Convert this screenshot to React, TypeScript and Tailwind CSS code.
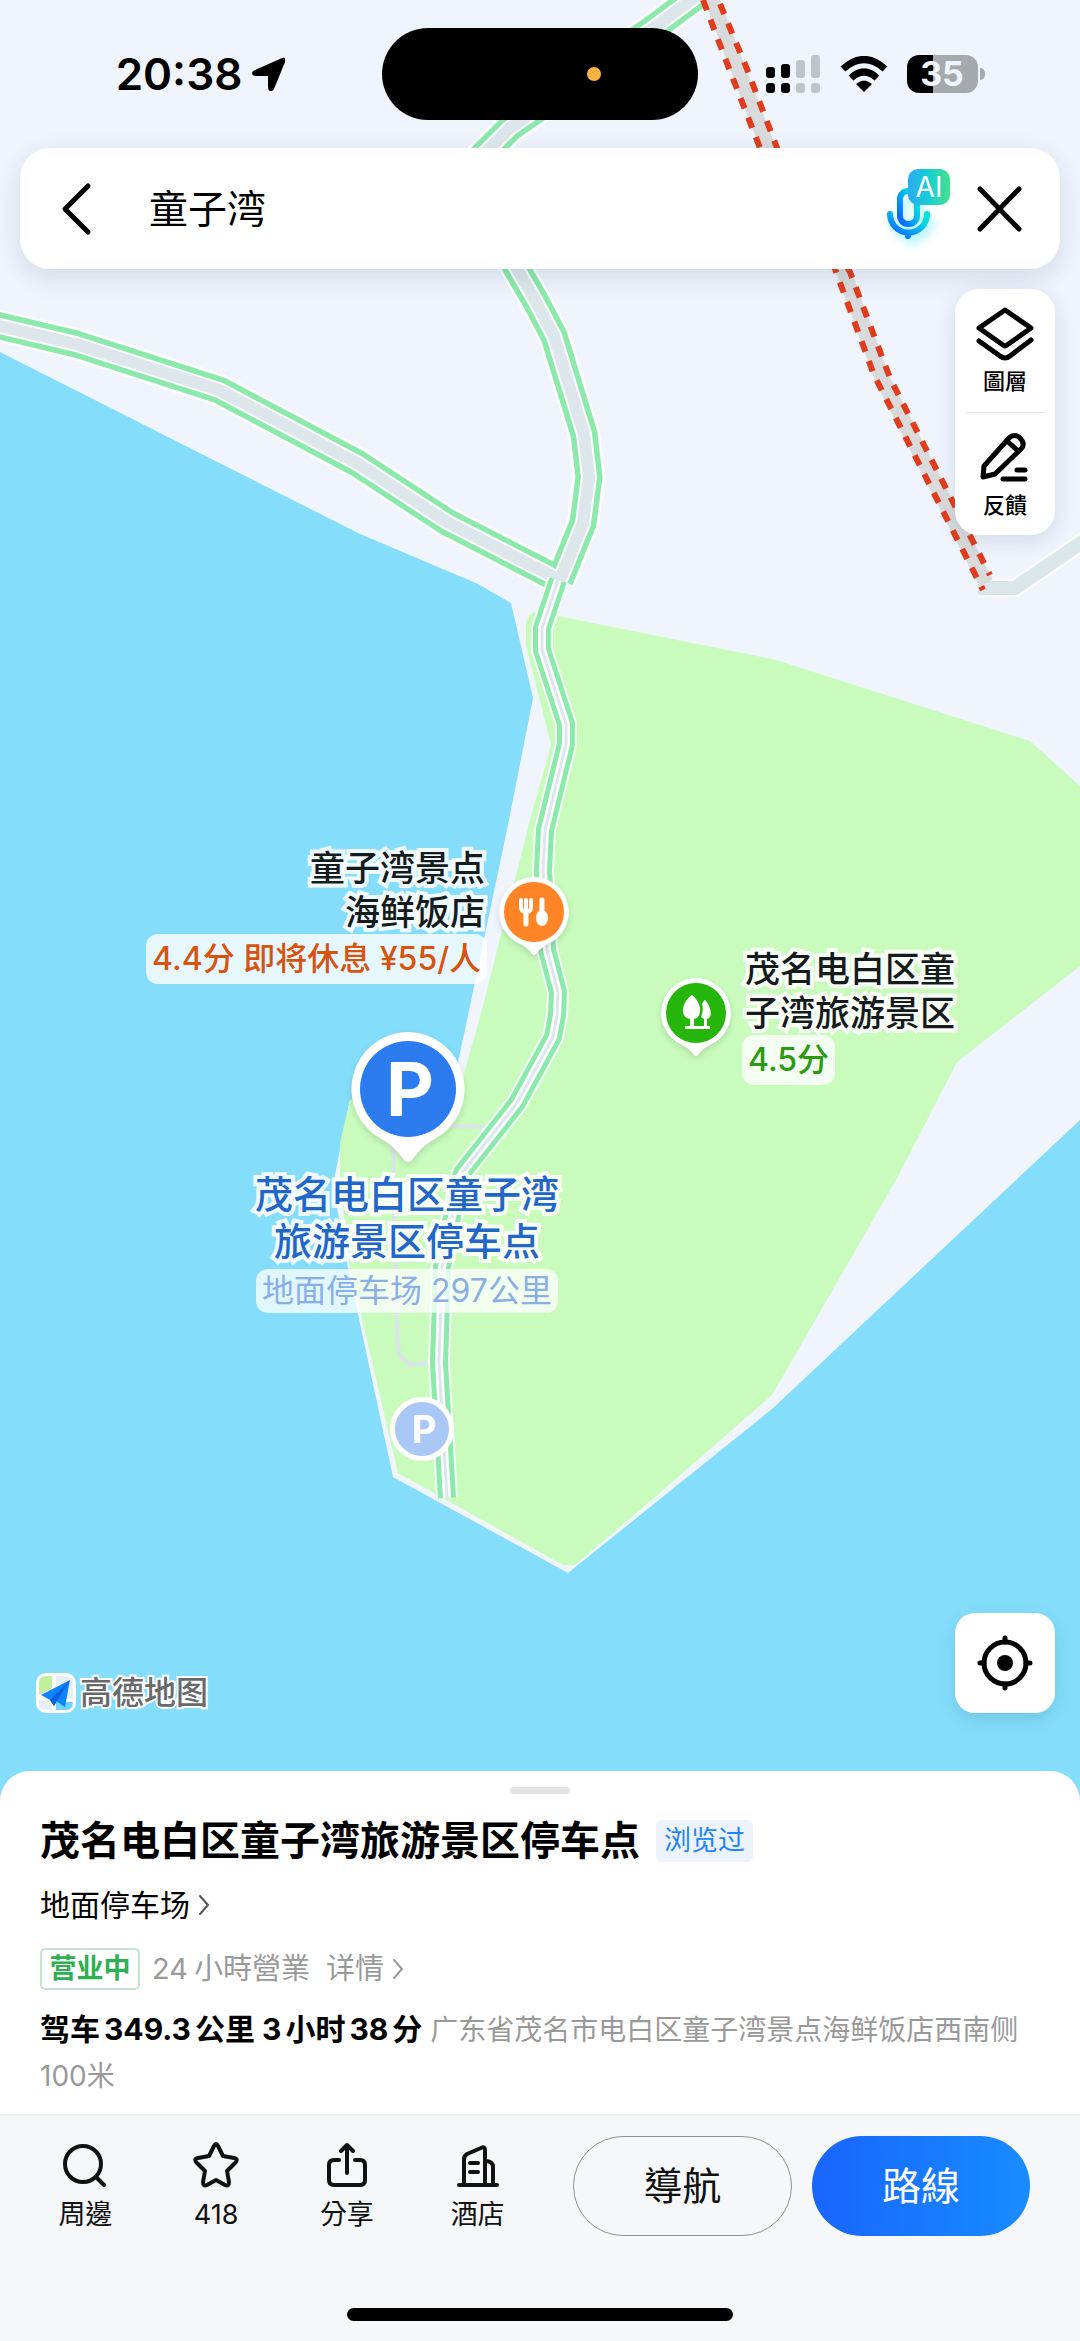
import { useState } from "react";
import type { ReactNode } from "react";

const LEFT_ROAD = "M-10 323 L0 326 L76 344 L219 390 L357 463 L447 522 L560 580";
const MAIN_ROAD = "M720 -22 L694 -2 L652 29 L510 128 L468 170 L480 200 L517 269 L535 300 L554 336 L584 434 L589 477 L583 523 L560 580";
const ISLAND_ROAD =
  "M558 580 L542 628 L542 650 L566 724 L566 744 L545 830 L543 870 L547 950 L558 992 L557 1015 L553 1037 L517 1103 L462 1173 L452 1217 L442 1267 L439 1363 L444 1447 L447 1498";

function MapCanvas() {
  return (
    <svg className="absolute inset-0 h-full w-full" aria-hidden="true">
      <path
        fill="#84defb"
        d="M0 352 L358 533 L478 584 L511 603 L533 698 L509 820 L467 1020 L452 1090 L350 1100 L333 1185 L347 1263 L393 1477 L568 1573 L772 1409 L1080 1120 L3000 -700 V3000 H0 Z"
      />
      <path
        fill="#c8fbbc"
        d="M536 612 L558 616 L776 660 L1030 741 L1080 786 V966 L957 1062 L896 1180 L772 1395 L640 1510 L575 1565 L563 1565 L398 1473 L349 1263 L340 1177 L340 1143 L350 1100 L460 1092 L465 1070 L482 1010 L530 820 L551 745 L526 645 L526 622 Q529 613 536 612 Z"
      />
      <g fill="none" strokeLinejoin="round">
        <path stroke="#dbe4ea" strokeWidth="4" d="M393 1140 L397 1330 L399 1355 L410 1365 L432 1362 M440 1126 L488 1127" />

        <path stroke="#fbfdfe" strokeWidth="19" d="M978 588 L1015 588 L1100 530" />
        <path stroke="#dbe6ea" strokeWidth="14" d="M978 588 L1015 588 L1100 530" />

        <path stroke="#fff" strokeWidth="32" d={LEFT_ROAD} />
        <path stroke="#fff" strokeWidth="32" d={MAIN_ROAD} />
        <path stroke="#8be9ab" strokeWidth="27" d={LEFT_ROAD} />
        <path stroke="#8be9ab" strokeWidth="27" d={MAIN_ROAD} />
        <path stroke="#fff" strokeWidth="16" d={LEFT_ROAD} />
        <path stroke="#fff" strokeWidth="16" d={MAIN_ROAD} />
        <path stroke="#dde7eb" strokeWidth="12" strokeLinecap="round" d={LEFT_ROAD} />
        <path stroke="#dde7eb" strokeWidth="12" strokeLinecap="round" d={MAIN_ROAD} />

        <path stroke="#f4fdf6" strokeWidth="22" d={ISLAND_ROAD} />
        <path stroke="#8be9ab" strokeWidth="18" d={ISLAND_ROAD} />
        <path stroke="#fff" strokeWidth="8" d={ISLAND_ROAD} />
        <path stroke="#dde7eb" strokeWidth="3" d={ISLAND_ROAD} />

        {/* closed road: grey bed with a dashed kerb on both sides */}
        <path stroke="#d9dadb" strokeWidth="15" d="M706 -16 L712 0 L768 148 L843 270 L882 378 L986 583" />
        <path stroke="#e03c1c" strokeWidth="6" strokeDasharray="11 10" d="M703 0 L730 71 L760 148 L835 269 L874 375 L983 590" />
        <path stroke="#e03c1c" strokeWidth="6" strokeDasharray="11 10" d="M720 4 L747 69 L777 148 L850 272 L890 378 L990 575" />
      </g>
    </svg>
  );
}

type PinProps = { color: string; children: ReactNode; className: string };

function Pin({ color, children, className }: PinProps) {
  return (
    <svg viewBox="0 0 72 82" className={`absolute h-[82px] w-[72px] overflow-visible drop-shadow-md ${className}`} aria-hidden="true">
      <path fill="#fff" d="M36 1 A35 35 0 0 1 50 68 Q43 71 38 78 Q36 80 34 78 Q29 71 22 68 A35 35 0 0 1 36 1 Z" />
      <circle cx="36" cy="36" r="30" fill={color} />
      {children}
    </svg>
  );
}

const OUTLINE = "[-webkit-text-stroke:8px_#ffffffe6] [paint-order:stroke_fill]";

function MapPins() {
  return (
    <>
      <Pin color="#ff8426" className="left-[498px] top-[876px]">
        <g fill="none" stroke="#fff" strokeLinecap="round">
          <path strokeWidth="4" d="M23 24 V31 Q23 36 28 36 Q33 36 33 31 V24 M28 24 V36" />
          <path strokeWidth="5" d="M28 36 V48 M44 24 V40" />
        </g>
        <ellipse cx="44" cy="42" rx="6" ry="8" fill="#fff" />
      </Pin>
      <div className="absolute right-[calc(100%-487px)] top-[846px] flex flex-col items-end whitespace-nowrap">
        <p className={`pr-[2px] text-right text-[35px] font-medium leading-[44px] text-[#151a1c] ${OUTLINE}`}>
          童子湾景点
          <br />
          海鲜饭店
        </p>
        <p className="rounded-xl bg-white/80 px-[6px] text-[32px] font-medium leading-[50px] text-[#d8530f]">4.4分 即将休息 ¥55/人</p>
      </div>

      <Pin color="#25b50b" className="left-[660px] top-[977px]">
        <path fill="#fff" d="M32 18 C37 22 41 29 40 35 Q39 41 34 42 V49 H44 V42 Q42 41 41 40 Q44 34 42 27 Q44 23 45 23 C50 28 54 40 47 42 V49 H50 V52 H25 V49 H30 V42 Q24 41 23 35 C22 29 27 21 32 18 Z" />
      </Pin>
      <div className="absolute left-[742px] top-[947px] flex flex-col items-start whitespace-nowrap">
        <p className={`pl-[3px] text-[35px] font-medium leading-[44px] text-[#151a1c] ${OUTLINE}`}>
          茂名电白区童
          <br />
          子湾旅游景区
        </p>
        <p className="rounded-xl bg-white/80 px-[6px] text-[32px] font-medium leading-[50px] text-[#2a9a10]">4.5分</p>
      </div>

      <div className="absolute left-[351px] top-[1032px] h-[131px] w-[114px] drop-shadow-md">
        <svg viewBox="0 0 114 131" className="absolute inset-0 overflow-visible" aria-hidden="true">
          <path fill="#fff" d="M57 0 A57 57 0 0 1 82 108 Q72 113 61 128 Q57 132 53 128 Q42 113 32 108 A57 57 0 0 1 57 0 Z" />
          <circle cx="57" cy="57" r="48" fill="#2c7cf0" />
        </svg>
        <span className="absolute inset-x-0 top-0 pl-1 text-center text-[74px] font-bold leading-[115px] text-white">P</span>
      </div>
      <div className="absolute left-[255px] top-[1171px] flex w-[304px] flex-col items-center whitespace-nowrap">
        <p className={`text-center text-[38px] font-medium leading-[47px] text-[#2166c8] ${OUTLINE}`}>
          茂名电白区童子湾
          <br />
          旅游景区停车点
        </p>
        <p className="mt-1 rounded-xl bg-white/75 px-[6px] text-[32px] leading-[44px] text-[#8aaee6]">地面停车场 297公里</p>
      </div>

      <div className="absolute left-[390px] top-[1397px] size-16 rounded-full border-5 border-white bg-[#a9c8f6] pl-1 text-center text-[38px] font-bold leading-[54px] text-white">
        P
      </div>
    </>
  );
}

function StatusBar() {
  return (
    <div className="grid h-[92px] grid-cols-[1fr_auto_1fr] items-center">
      <div className="flex items-center justify-center gap-[10px] pl-5">
        <span className="text-[44px] font-semibold leading-[48px]">20:38</span>
        <svg viewBox="0 0 34 34" className="size-[34px]" aria-hidden="true">
          <path d="M30 1 Q34 -1 33 5 L22 32 Q20 35 18 34 Q16 33 16 30 V19 H4 Q0 19 0 16 Q0 14 3 13 Z" />
        </svg>
      </div>
      <div className="flex h-full w-[316px] items-center rounded-full bg-black">
        <span className="ml-[205px] size-[14px] rounded-full bg-[#ffb340]" />
      </div>
      <div className="flex items-center justify-center gap-[19px] pr-7">
        <svg viewBox="0 0 55 38" className="h-[38px] w-[55px]" aria-hidden="true">
          <g>
            <rect x="0" y="12" width="9" height="11" rx="3" />
            <rect x="15" y="9" width="9" height="14" rx="3" />
            <rect x="0" y="28" width="9" height="10" rx="3" />
            <rect x="15" y="28" width="9" height="10" rx="3" />
          </g>
          <g fill="#bfc3ca">
            <rect x="30" y="5" width="9" height="18" rx="3" />
            <rect x="45" y="0" width="9" height="23" rx="3" />
            <rect x="30" y="28" width="9" height="10" rx="3" />
            <rect x="45" y="28" width="9" height="10" rx="3" />
          </g>
        </svg>
        <svg viewBox="0 0 48 36" className="h-9 w-12" aria-hidden="true">
          <path d="M24 36 L16 28 Q24 21 32 28 Z" />
          <path fill="none" stroke="#000" strokeWidth="7" d="M3 13 Q24 -6 45 13 M11 22 Q24 10 37 22" />
        </svg>
        <div className="flex items-center gap-[2px]">
          <div className="h-[38px] w-[71px] rounded-[12px] bg-[linear-gradient(90deg,#000_36%,#a6a9ae_36%)] text-center text-[34px] font-bold leading-[38px] text-[#eff4fd]">
            35
          </div>
          <span className="h-3 w-[5px] rounded-r-full bg-[#a6a9ae]" />
        </div>
      </div>
    </div>
  );
}

function SearchCard() {
  const [keyword, setKeyword] = useState("童子湾");

  return (
    <form className="mx-5 mt-7 flex h-[121px] items-center rounded-[30px] bg-white pl-9 pr-[34px] shadow-[0_8px_24px_rgba(60,90,110,0.16)]">
      <button type="button" aria-label="返回">
        <svg viewBox="0 0 42 54" className="h-[54px] w-[42px]" fill="none" stroke="#000" strokeWidth="5" strokeLinecap="round" strokeLinejoin="round">
          <path d="M32 4 L9 27 L32 50" />
        </svg>
      </button>
      <input
        aria-label="搜索"
        value={keyword}
        onChange={(e) => setKeyword(e.target.value)}
        className="ml-[51px] min-w-0 flex-1 bg-transparent text-[39px] leading-[56px] outline-none"
      />
      <button type="button" aria-label="AI 语音搜索" className="relative mb-2 mr-[22px] h-[76px] w-[68px]">
        <svg viewBox="0 0 68 76" className="h-full w-full drop-shadow-[4px_6px_5px_rgba(0,220,230,0.35)]" fill="none" strokeLinecap="round">
          <defs>
            <linearGradient id="mic" x1="0" y1="1" x2="1" y2="0">
              <stop offset="0.1" stopColor="#0a6cff" />
              <stop offset="0.8" stopColor="#00dfe2" />
            </linearGradient>
          </defs>
          <rect x="18" y="24" width="17" height="33" rx="8" stroke="url(#mic)" strokeWidth="6" />
          <path d="M8 47 A18 18 0 0 0 45 47 M26 66 V69" stroke="url(#mic)" strokeWidth="6" />
        </svg>
        <span className="absolute left-[26px] top-[2px] h-9 w-[42px] rounded-[10px] bg-linear-to-r from-[#2fa8f5] via-[#12cfd0] to-[#43e08a] text-[28px] leading-9 text-white">
          AI
        </span>
      </button>
      <button type="button" aria-label="清除">
        <svg viewBox="0 0 54 54" className="size-[54px]" stroke="#000" strokeWidth="5" strokeLinecap="round">
          <path d="M8 7 L47 47 M47 7 L8 47" />
        </svg>
      </button>
    </form>
  );
}

function MapTools() {
  return (
    <div className="mr-[25px] mt-5 flex w-[100px] flex-col self-end rounded-[24px] bg-white px-[10px] font-['Inter','Noto_Sans_CJK_TC',sans-serif] text-[22px] font-medium leading-8 shadow-[0_6px_20px_rgba(60,90,110,0.16)]">
      <button type="button" className="flex h-[124px] flex-col items-center border-b border-[#e4e6e8] pt-4">
        <svg viewBox="0 0 60 56" className="h-14 w-15" fill="none" stroke="#000" strokeWidth="5" strokeLinecap="round" strokeLinejoin="round">
          <path d="M30 5 L56 23 L32 40 Q30 42 28 40 L4 23 Z" />
          <path d="M4 36 L25 51 Q30 55 35 51 L56 35" />
        </svg>
        <span className="mt-[4px]">圖層</span>
      </button>
      <button type="button" className="flex h-[122px] flex-col items-center pt-4">
        <svg viewBox="0 0 60 56" className="h-14 w-15" fill="none" stroke="#000" strokeWidth="5" strokeLinecap="round" strokeLinejoin="round">
          <path d="M8 48 L9 37 L34 9 Q39 4 45 9 Q51 15 46 20 L20 45 Z M32 12 L43 22" />
          <path d="M42 41 H50 M28 50 H50" />
        </svg>
        <span className="mt-[4px]">反饋</span>
      </button>
    </div>
  );
}

function MapFooter() {
  return (
    <div className="mt-auto flex items-end justify-between pl-9 pr-[25px]">
      <div className="flex items-center gap-1">
        <svg viewBox="0 0 40 40" className="size-10" aria-hidden="true">
          <rect width="40" height="40" rx="10" fill="#fff" />
          <path fill="#c0f09c" d="M3 10 Q3 3 10 3 H16 V15 L3 22 Z" />
          <path fill="#e9eef1" d="M20 3 H30 Q37 3 37 10 V26 H20 Z M3 27 H16 V37 H10 Q3 37 3 30 Z" />
          <path fill="#6fd2fa" d="M20 29 H37 Q37 37 30 37 H20 Z" />
          <path fill="#0a84ff" d="M34 7 L5 22 L14 27 L18 33 L20 28 L29 34 Z" />
          <path fill="#0a5fe0" d="M34 7 L14 27 L18 33 Z" />
        </svg>
        <span className="text-[32px] font-medium leading-10 text-[#67696b] [-webkit-text-stroke:4px_#ffffff] [paint-order:stroke_fill]">高德地图</span>
      </div>
      <button type="button" aria-label="定位" className="flex size-[100px] items-center justify-center rounded-[20px] bg-white shadow-[0_6px_16px_rgba(30,90,120,0.18)]">
        <svg viewBox="0 0 56 56" className="size-14" fill="none" stroke="#000" strokeWidth="5" strokeLinecap="round">
          <circle cx="28" cy="28" r="21" />
          <path d="M28 3 V7 M28 49 V53 M3 28 H7 M49 28 H53" />
          <circle cx="28" cy="28" r="8" fill="#000" stroke="none" />
        </svg>
      </button>
    </div>
  );
}

function Chevron({ color }: { color: string }) {
  return (
    <svg viewBox="0 0 12 22" className="h-[22px] w-3" fill="none" stroke={color} strokeWidth="2" strokeLinecap="round" strokeLinejoin="round" aria-hidden="true">
      <path d="M2 2 L10 11 L2 20" />
    </svg>
  );
}

function PlaceSheet() {
  return (
    <section className="relative -mt-8 rounded-t-[30px] bg-white px-10 pb-[15px] pt-4">
      <div className="mx-auto h-[7px] w-[60px] rounded-full bg-[#e3e3e3]" />
      <div className="mt-[26px] flex h-[42px] items-center gap-4">
        <h1 className="whitespace-nowrap text-[40px] font-bold leading-[42px]">茂名电白区童子湾旅游景区停车点</h1>
        <span className="whitespace-nowrap rounded-md bg-[#edf3fe] px-2 text-[27px] leading-[42px] text-[#1f86fa]">浏览过</span>
      </div>
      <a href="#type" className="mt-6 flex h-[38px] items-center gap-2 text-[30px] leading-[38px]">
        地面停车场
        <Chevron color="#555" />
      </a>
      <div className="mt-6 flex h-[42px] items-center text-[29px] text-[#999]">
        <span className="flex h-full w-[100px] items-center justify-center rounded-[5px] border-2 border-[#c5e6cc] text-[27px] font-bold text-[#2bb052]">营业中</span>
        <span className="ml-3 font-['Inter','Noto_Sans_CJK_TC',sans-serif]">
          <span className="mr-[6px]">24</span>小時營業
        </span>
        <a href="#detail" className="ml-4 flex items-center gap-2">
          详情
          <Chevron color="#999" />
        </a>
      </div>
      <p className="mt-4 text-[28px] leading-[46px] text-[#999]">
        <b className="text-[30px] text-black">
          驾车<span className="mx-1">349.3</span>公里 <span className="mr-1">3</span>小时<span className="mx-1">38</span>分
        </b>{" "}
        广东省茂名市电白区童子湾景点海鲜饭店西南侧
        <span className="whitespace-nowrap">100米</span>
      </p>
    </section>
  );
}

const actions = [
  {
    label: "周邊",
    icon: (
      <>
        <circle cx="22" cy="23" r="18" />
        <path d="M35 36 L43 44" />
      </>
    ),
  },
  {
    label: "418",
    icon: (
      <path d="M22 5 Q24 1 26 5 L31 15 L42 17 Q47 18 43 22 L35 30 L37 41 Q37 46 33 44 L24 39 L15 44 Q11 46 11 41 L13 30 L5 22 Q1 18 6 17 L17 15 Z" />
    ),
  },
  {
    label: "分享",
    icon: (
      <>
        <path d="M16 19 H11 Q6 19 6 24 V39 Q6 44 11 44 H37 Q42 44 42 39 V24 Q42 19 37 19 H32" />
        <path d="M24 32 V5 M18 10 L24 4 L30 10" />
      </>
    ),
  },
  {
    label: "酒店",
    icon: (
      <>
        <path d="M5 44 H43 M10 44 V18 Q10 15 13 13 L27 7 Q31 5 31 9 V44 M31 20 Q39 20 39 26 V44" />
        <path d="M16 22 H24 M16 31 H24" />
      </>
    ),
  },
];

function BottomBar() {
  return (
    <footer className="relative border-t-2 border-[#edf0f0] bg-[#f6f7f9] pb-5 pt-5 font-['Inter','Noto_Sans_CJK_TC',sans-serif]">
      <div className="flex items-start pl-5 pr-[50px]">
        <nav className="mr-[30px] grid flex-1 grid-cols-4">
          {actions.map((action) => (
            <button key={action.label} type="button" className="flex flex-col items-center gap-2 pt-[5px] text-[27px] leading-9 text-[#111]">
              <svg viewBox="0 0 48 48" className="size-12" fill="none" stroke="#111" strokeWidth="4" strokeLinecap="round" strokeLinejoin="round" aria-hidden="true">
                {action.icon}
              </svg>
              {action.label}
            </button>
          ))}
        </nav>
        <button type="button" className="h-[100px] w-[219px] rounded-full border border-[#8f9194] text-[39px] text-[#111]">
          導航
        </button>
        <button type="button" className="ml-5 h-[100px] w-[218px] rounded-full bg-linear-to-r from-[#1a64ff] to-[#1a8cff] text-[39px] text-white">
          路線
        </button>
      </div>
      <div className="mx-auto mt-[72px] h-[13px] w-[386px] rounded-full bg-black" />
    </footer>
  );
}

export default function App() {
  return (
    <div className="flex min-h-screen flex-col bg-[#eff4fd] font-['Inter','Noto_Sans_CJK_SC',sans-serif] text-black">
      <main className="relative flex flex-1 flex-col overflow-hidden pb-[90px] pt-7">
        <MapCanvas />
        <MapPins />
        <div className="relative flex flex-1 flex-col">
          <StatusBar />
          <SearchCard />
          <MapTools />
          <MapFooter />
        </div>
      </main>
      <PlaceSheet />
      <BottomBar />
    </div>
  );
}
